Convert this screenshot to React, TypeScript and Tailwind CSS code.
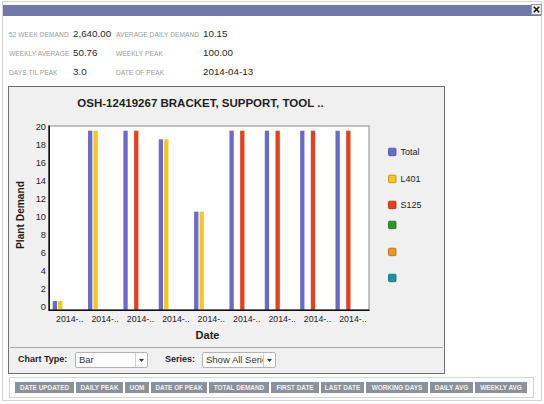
import React from "react";

const BLUE = "#6a6acb";
const YELLOW = "#f3c71c";
const RED = "#e5401b";

type G = { total: number; l401?: number; s125?: number };
// values are bar top y coordinates (page coordinates), axis at y=310
const groups: G[] = [
  { total: 301, l401: 301 },
  { total: 130.7, l401: 130.7 },
  { total: 130.7, s125: 130.7 },
  { total: 139.3, l401: 139.3 },
  { total: 211.7, l401: 211.7 },
  { total: 130.7, s125: 130.7 },
  { total: 130.7, s125: 130.7 },
  { total: 130.7, s125: 130.7 },
  { total: 130.7, s125: 130.7 },
];

const legend = [
  { label: "Total", color: BLUE, border: "#4a4aa8", y: 152 },
  { label: "L401", color: YELLOW, border: "#a88a10", y: 179 },
  { label: "S125", color: RED, border: "#b02a10", y: 205 },
  { label: "", color: "#2b9a2b", border: "#1a6a1a", y: 225 },
  { label: "", color: "#f0921c", border: "#b06a10", y: 252 },
  { label: "", color: "#1a92a8", border: "#0e6a7a", y: 278 },
];

const tabs: [string, number][] = [
  ["DATE UPDATED", 59],
  ["DAILY PEAK", 47],
  ["UOM", 24],
  ["DATE OF PEAK", 56],
  ["TOTAL DEMAND", 60],
  ["FIRST DATE", 48],
  ["LAST DATE", 43],
  ["WORKING DAYS", 62],
  ["DAILY AVG", 43],
  ["WEEKLY AVG", 52],
];

function Chart() {
  const ticks = [0, 2, 4, 6, 8, 10, 12, 14, 16, 18, 20];
  return (
    <svg width={435} height={260} viewBox="9 87 435 260" className="block">
      <text x={200.5} y={107} textAnchor="middle" fontSize={11.5} fontWeight={700} fill="#1e1e1e" fontFamily="Liberation Sans, Arial, sans-serif">
        OSH-12419267 BRACKET, SUPPORT, TOOL ..
      </text>
      <rect x={49} y={126} width={320} height={184} fill="#ffffff" stroke="#8a8a8a" strokeWidth={1} />
      {groups.map((g, i) => {
        const x = 52.7 + 35.35 * i;
        return (
          <g key={i}>
            <rect x={x} y={g.total} width={4.3} height={310 - g.total} fill={BLUE} />
            {g.l401 !== undefined && <rect x={x + 5.4} y={g.l401} width={4.3} height={310 - g.l401} fill={YELLOW} />}
            {g.s125 !== undefined && <rect x={x + 10.7} y={g.s125} width={4.3} height={310 - g.s125} fill={RED} />}
            <text x={69.7 + 35.4 * i} y={321.5} textAnchor="middle" fontSize={8.8} fill="#222" fontFamily="Liberation Sans, Arial, sans-serif">
              2014-..
            </text>
          </g>
        );
      })}
      <line x1={49.2} y1={125.5} x2={49.2} y2={310.5} stroke="#111" strokeWidth={1.6} />
      <line x1={48.5} y1={310.2} x2={369.5} y2={310.2} stroke="#111" strokeWidth={1.6} />
      {ticks.map((t) => (
        <text key={t} x={46} y={307 - t * 9 + 3.3} textAnchor="end" fontSize={9.3} fill="#222" fontFamily="Liberation Sans, Arial, sans-serif">
          {t}
        </text>
      ))}
      <text x={207.5} y={338.5} textAnchor="middle" fontSize={11} fontWeight={700} fill="#1e1e1e" fontFamily="Liberation Sans, Arial, sans-serif">
        Date
      </text>
      <text
        x={0}
        y={0}
        transform="translate(23.5 215) rotate(-90)"
        textAnchor="middle"
        fontSize={10.2}
        fontWeight={700}
        fill="#1e1e1e"
        fontFamily="Liberation Sans, Arial, sans-serif"
      >
        Plant Demand
      </text>
      {legend.map((l, i) => (
        <g key={i}>
          <rect x={388.5} y={l.y - 3.8} width={7.5} height={7.5} rx={1} fill={l.color} stroke={l.border} strokeWidth={0.8} />
          {l.label && (
            <text x={400.5} y={l.y + 3.3} fontSize={9} fill="#222" fontFamily="Liberation Sans, Arial, sans-serif">
              {l.label}
            </text>
          )}
        </g>
      ))}
    </svg>
  );
}

function Select({ text, width }: { text: string; width: number }) {
  return (
    <div
      className="h-[16px] flex items-stretch bg-white border border-[#b4b4b4] rounded-[2px] overflow-hidden"
      style={{ width }}
    >
      <div className="flex-1 min-w-0 overflow-hidden whitespace-nowrap pl-[3px] text-[9.5px] leading-[14px] text-[#333]">{text}</div>
      <div className="w-[12px] border-l border-[#cfcfcf] flex items-center justify-center">
        <svg width="5" height="3" viewBox="0 0 5 3">
          <path d="M0 0 L5 0 L2.5 3 Z" fill="#333" />
        </svg>
      </div>
    </div>
  );
}

export default function App() {
  const row = "h-[19px] flex items-center";
  const label = "text-[6.6px] text-[#9a9a9a] tracking-[0.05px]";
  const value = "text-[9.8px] text-[#2a2a2a]";
  return (
    <div className="w-[544px] h-[404px] bg-white overflow-hidden pt-[1px] pl-[2px] font-['Liberation_Sans',Arial,sans-serif]">
      <div className="w-[540px] h-[400px] border border-[#d4d4d4] flex flex-col">
        <div className="mt-[3px] h-[11px] bg-[#6f79a5] flex justify-end">
          <div className="w-[11px] h-[11px] -mt-[1px] -mr-[1px] bg-[#ececec] border border-[#9a9a9a] flex items-center justify-center">
            <svg width="7" height="7" viewBox="0 0 7 7">
              <path d="M0.8 0.8 L6.2 6.2 M6.2 0.8 L0.8 6.2" stroke="#111" strokeWidth="1.6" />
            </svg>
          </div>
        </div>

        <div className="mt-[9px] pl-[6px] grid grid-cols-[64px_43px_87px_auto]">
          <div className={`${row} ${label}`}>52 WEEK DEMAND</div>
          <div className={`${row} ${value}`}>2,640.00</div>
          <div className={`${row} ${label}`}>AVERAGE DAILY DEMAND</div>
          <div className={`${row} ${value}`}>10.15</div>
          <div className={`${row} ${label}`}>WEEKLY AVERAGE</div>
          <div className={`${row} ${value}`}>50.76</div>
          <div className={`${row} ${label}`}>WEEKLY PEAK</div>
          <div className={`${row} ${value}`}>100.00</div>
          <div className={`${row} ${label}`}>DAYS TIL PEAK</div>
          <div className={`${row} ${value}`}>3.0</div>
          <div className={`${row} ${label}`}>DATE OF PEAK</div>
          <div className={`${row} ${value}`}>2014-04-13</div>
        </div>

        <div className="mt-[4px] ml-[5px] w-[437px] h-[288px] border border-[#6e6e6e] bg-[#f0f0f0] flex flex-col">
          <Chart />
          <div className="mx-[1px] border-t border-[#a6a6a6]" />
          <div className="flex-1 flex items-center pl-[9px] pb-[1px]">
            <div className="w-[57px] text-[9px] font-bold text-[#1e1e1e]">Chart Type:</div>
            <Select text="Bar" width={73} />
            <div className="ml-[17px] w-[37px] text-[9px] font-bold text-[#1e1e1e]">Series:</div>
            <Select text="Show All Series" width={74} />
          </div>
        </div>

        <div className="mt-[3px] ml-[6px] w-[525px] h-[21px] border border-[#d6d6d6] pt-[4px] pl-[5px] flex gap-[2px] items-start">
          {tabs.map(([t, w]) => (
            <div
              key={t}
              className="h-[11px] bg-[#8b909b] text-[#f2f2f2] font-bold text-[6.4px] flex items-center justify-center whitespace-nowrap"
              style={{ width: w }}
            >
              {t}
            </div>
          ))}
        </div>
      </div>
    </div>
  );
}
